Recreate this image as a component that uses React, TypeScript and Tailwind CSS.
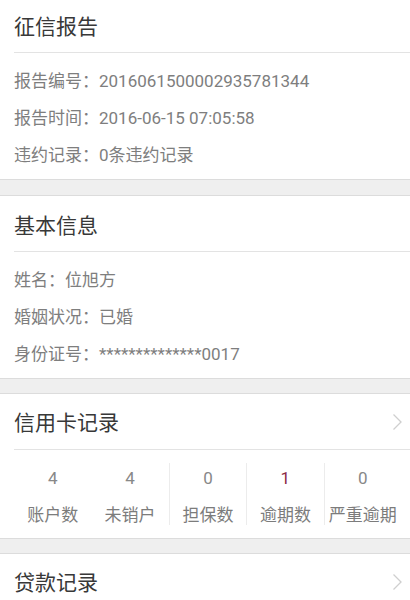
import React from "react";

const font = { fontFamily: 'Roboto, "Noto Sans CJK SC", sans-serif' };

function Chevron() {
  return (
    <svg width="11" height="18" viewBox="0 0 11 18" className="shrink-0">
      <polyline points="1.5,1.5 9,9 1.5,16.5" fill="none" stroke="#cfcfcf" strokeWidth="1.3" />
    </svg>
  );
}

function Header({ title, h, pt, chevron }: { title: string; h: string; pt: string; chevron?: boolean }) {
  return (
    <div className="pl-[14px]">
      <div className={`flex items-center justify-between border-b border-[#e3e3e3] pr-[7px] ${h}`}>
        <span className={`text-[21px] text-[#383838] leading-none ${pt}`}>{title}</span>
        {chevron && <Chevron />}
      </div>
    </div>
  );
}

function Gap({ h }: { h: string }) {
  return <div className={`${h} bg-[#efefef] border-y border-[#dcdcdc]`} />;
}

function Rows({ rows }: { rows: [string, string][] }) {
  return (
    <div className="pl-[14px] pt-[10px] pb-[5px]">
      {rows.map(([k, v]) => (
        <div key={k} className="h-[37px] flex items-center text-[17px] text-[#7e7e7e]">
          <span>{k}：</span>
          <span>{v}</span>
        </div>
      ))}
    </div>
  );
}

const stats: { n: string; label: string; red?: boolean; divider?: boolean }[] = [
  { n: "4", label: "账户数" },
  { n: "4", label: "未销户" },
  { n: "0", label: "担保数", divider: true },
  { n: "1", label: "逾期数", red: true, divider: true },
  { n: "0", label: "严重逾期", divider: true },
];

export default function App() {
  return (
    <div className="w-[410px] h-[600px] overflow-hidden bg-white" style={font}>
      <div className="bg-white">
        <Header title="征信报告" h="h-[53px]" pt="pt-[3px]" />
        <Rows
          rows={[
            ["报告编号", "2016061500002935781344"],
            ["报告时间", "2016-06-15 07:05:58"],
            ["违约记录", "0条违约记录"],
          ]}
        />
      </div>
      <Gap h="h-[17px]" />
      <div className="bg-white">
        <Header title="基本信息" h="h-[56px]" pt="pt-[5px]" />
        <Rows
          rows={[
            ["姓名", "位旭方"],
            ["婚姻状况", "已婚"],
            ["身份证号", "**************0017"],
          ]}
        />
      </div>
      <Gap h="h-[16px]" />
      <div className="bg-white">
        <Header title="信用卡记录" h="h-[56px]" pt="pt-[4px]" chevron />
        <div className="pl-[14px] pr-[9px] grid grid-cols-5 h-[88px] items-center">
          {stats.map((s) => (
            <div
              key={s.label}
              className={`flex flex-col items-center h-[62px] justify-between ${s.divider ? "border-l border-[#ececec]" : ""}`}
            >
              <span
                className={`text-[17px] leading-none mt-[7px] ${s.red ? "text-[#8c2b47]" : "text-[#888888]"}`}
              >
                {s.n}
              </span>
              <span className="text-[17px] leading-none text-[#7c7c7c] mb-[1px] whitespace-nowrap">{s.label}</span>
            </div>
          ))}
        </div>
      </div>
      <Gap h="h-[16px]" />
      <div className="bg-white">
        <Header title="贷款记录" h="h-[56px]" pt="pt-[4px]" chevron />
      </div>
    </div>
  );
}
